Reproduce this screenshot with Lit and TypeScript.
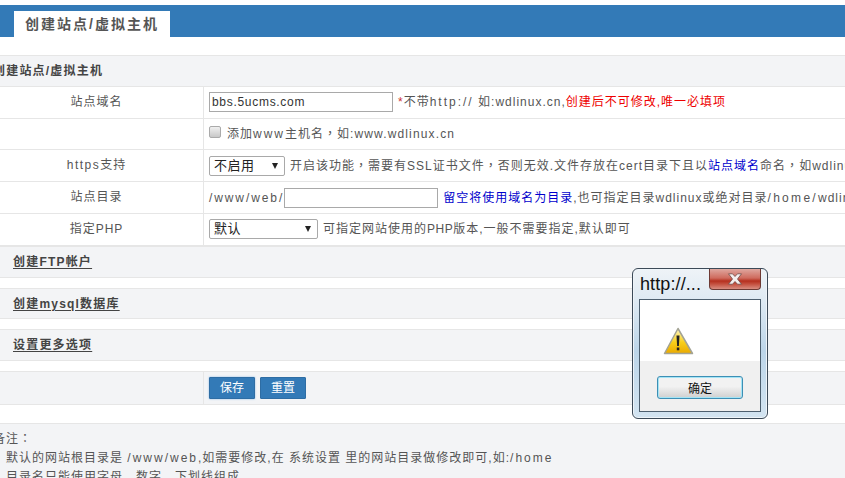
import { LitElement, html, css } from "lit";
import { customElement } from "lit/decorators.js";

@customElement("app-root")
export class AppRoot extends LitElement {
  static styles = css`
    :host {
      display: block;
      position: relative;
      width: 845px;
      height: 478px;
      overflow: hidden;
      background: #fff;
      color: #555;
      font: 12px/16px "Liberation Sans", "Noto Sans CJK SC", sans-serif;
      letter-spacing: 1px;
    }
    * { box-sizing: border-box; }
    .page { padding-top: 5px; white-space: nowrap; }
    .bar {
      height: 32px;
      background: #337ab7;
      padding: 6px 0 0 14px;
      margin-bottom: 18px;
    }
    .tab {
      display: inline-block;
      width: 156px;
      height: 26px;
      background: #fff;
      color: #555;
      font-size: 14px;
      font-weight: 700;
      line-height: 27px;
      text-align: center;
      letter-spacing: 2px;
    }
    .head {
      height: 31.800px;
      background: #f3f4f6;
      border-top: 1px solid #e6e6e6;
      border-bottom: 1px solid #e6e6e6;
      font-weight: 700;
      line-height: 30px;
      padding-left: 13px;
      color: #444;
      letter-spacing: 1.200px;
    }
    .head.first { padding-left: 0; text-indent: -7px; overflow: hidden; }
    .head u { text-underline-offset: 2px; }
    .gap { height: 10px; }
    .row {
      display: flex;
      height: 31.800px;
      border-bottom: 1px solid #e6e6e6;
    }
    .row .lab {
      flex: 0 0 204px;
      border-right: 1px solid #e6e6e6;
      text-align: center;
      line-height: 31px;
      padding-right: 10px;
    }
    .row .val {
      flex: 1;
      min-width: 0;
      overflow: hidden;
      padding-left: 5px;
      display: flex;
      align-items: center;
    }
    .row.tall { height: 33.400px; background: #f3f4f6; border-top: 1px solid #e6e6e6; }
    .inp {
      height: 20px;
      border: 1px solid #a9a9a9;
      background: #fff;
      font: inherit;
      letter-spacing: 0.700px;
      padding: 0 2px;
      color: #333;
      outline: none;
    }
    .site { width: 184px; }
    .dir { width: 154px; margin-right: 5px; flex: none; }
    .sel {
      position: relative;
      display: inline-block;
      height: 20px;
      border: 1px solid #a9a9a9;
      border-radius: 2px;
      background: #fff;
      color: #222;
      font-size: 13px;
      line-height: 18px;
      padding-left: 4px;
      margin-right: 5px;
      flex: none;
      letter-spacing: 0.500px;
    }
    .sel::after {
      content: "";
      position: absolute;
      top: 6px;
      right: 6px;
      border-left: 3px solid transparent;
      border-right: 3px solid transparent;
      border-top: 6px solid #222;
    }
    .sel.s1 { width: 76px; }
    .sel.s2 { width: 109px; }
    .cb {
      flex: none;
      width: 12px;
      height: 12px;
      margin: 0 6px 4px 0;
      border: 1px solid #aaa;
      border-radius: 2px;
      background: linear-gradient(#f0f0f0, #c8c8c8);
    }
    .hint { margin-left: 5px; }
    .red { color: #e00; }
    .star { color: #c33; }
    .blue { color: #00c; }
    .w { letter-spacing: 2px; }
    .w2 { letter-spacing: 1.900px; }
    .w3 { letter-spacing: 2.300px; }
    .ws { letter-spacing: 1.150px; }
    .ht { letter-spacing: 1.500px; }
    .ph { letter-spacing: 0.500px; }
    .p { font-family: "Noto Sans CJK TC", sans-serif; }
    .btn {
      display: inline-block;
      width: 46px;
      height: 22px;
      background: #337ab7;
      color: #fff;
      border: 1px solid #2e6da4;
      font-size: 12px;
      line-height: 21px;
      text-align: center;
      border-radius: 1px;
      margin-right: 5px;
      letter-spacing: 0;
    }
    .btn.focus { box-shadow: 0 0 2px 0 #7fb2e6; }
    .notes {
      margin-top: 18px;
      height: 60px;
      background: #f3f4f6;
      border-top: 1px solid #e6e6e6;
      padding-top: 4px;
      line-height: 19px;
    }
    .notes .t { margin-left: -7px; }
    .notes .l { padding-left: 6px; }
    .dlg {
      position: absolute;
      left: 632px;
      top: 268px;
      width: 136px;
      height: 151px;
      border: 1px solid #3c4a58;
      border-radius: 6px;
      background: linear-gradient(#eef3f7, #dfeaf3 20%, #bcd5e9 55%, #d3e4f1);
      padding: 0 6px 6px;
      display: flex;
      flex-direction: column;
      letter-spacing: 0;
      box-shadow: inset 0 0 0 1px #eef4f9;
    }
    .dlg-title {
      height: 30px;
      flex: none;
      color: #111;
      font: 18px/31px "Liberation Sans", sans-serif;
      padding-left: 1px;
      letter-spacing: 0.100px;
    }
    .close {
      position: absolute;
      top: 0;
      right: 6px;
      width: 52px;
      height: 21px;
      border: 1px solid #6d3a34;
      border-top: none;
      border-radius: 0 0 4px 4px;
      background: linear-gradient(#dfa79f, #cf6b5e 45%, #b5301f 60%, #c4503f 75%, #d88d80);
      display: flex;
      align-items: center;
      justify-content: center;
    }
    .dlg-body {
      flex: 1;
      border: 1px solid #4d5f6f;
      background: #f0f0f0;
      display: flex;
      flex-direction: column;
    }
    .dlg-top { height: 61px; background: #fff; padding: 27px 0 0 23px; }
    .dlg-top svg { display: block; }
    .dlg-foot { flex: 1; padding-top: 15px; display: flex; justify-content: center; }
    .ok {
      width: 86px;
      height: 23px;
      border: 1px solid #3d8fb5;
      border-radius: 3px;
      box-shadow: inset 0 0 0 1px #a4e4f5;
      background: linear-gradient(#f2f2f2 45%, #cfcfcf);
      color: #111;
      font: 12px/21px "Noto Sans CJK SC", sans-serif;
      text-align: center;
    }
  `;

  render() {
    return html`
      <div class="page">
        <div class="bar"><span class="tab">创建站点/虚拟主机</span></div>
        <div class="head first">创建站点/虚拟主机</div>
        <div class="row">
          <div class="lab">站点域名</div>
          <div class="val">
            <input class="inp site" .value=${"bbs.5ucms.com"} />
            <span class="hint"><span class="star">*</span>不带<span class="w">http://</span> 如:wdlinux.cn,<span class="red">创建后不可修改,唯一必填项</span></span>
          </div>
        </div>
        <div class="row">
          <div class="lab"></div>
          <div class="val"><span class="cb"></span><span>添加<span class="w">www</span>主机名<span class="p">，</span>如:<span class="ws">www.wdlinux.cn</span></span></div>
        </div>
        <div class="row">
          <div class="lab"><span class="ht">https</span>支持</div>
          <div class="val">
            <span class="sel s1">不启用</span>
            <span>开启该功能<span class="p">，</span>需要有SSL证书文件<span class="p">，</span>否则无效.文件存放在cert目录下且以<span class="blue">站点域名</span>命名<span class="p">，</span>如wdlinux.cn.crt</span>
          </div>
        </div>
        <div class="row">
          <div class="lab">站点目录</div>
          <div class="val">
            <span class="w2">/www/web/</span><input class="inp dir" />
            <span><span class="blue">留空将使用域名为目录</span>,也可指定目录wdlinux或绝对目录<span class="w3">/home/</span>wdlinux</span>
          </div>
        </div>
        <div class="row">
          <div class="lab">指定PHP</div>
          <div class="val">
            <span class="sel s2">默认</span>
            <span>可指定网站使用的<span class="ph">PHP</span>版本,一般不需要指定,默认即可</span>
          </div>
        </div>
        <div class="head"><u>创建FTP帐户</u></div>
        <div class="gap"></div>
        <div class="head"><u>创建mysql数据库</u></div>
        <div class="gap"></div>
        <div class="head"><u>设置更多选项</u></div>
        <div class="gap"></div>
        <div class="row tall">
          <div class="lab"></div>
          <div class="val"><span class="btn focus">保存</span><span class="btn">重置</span></div>
        </div>
        <div class="notes">
          <div class="t">备注<span class="p">：</span></div>
          <div class="l">默认的网站根目录是 <span class="w">/www/web</span>,如需要修改,在 系统设置 里的网站目录做修改即可,如:<span class="w">/home</span></div>
          <div class="l">目录名只能使用字母、数字、下划线组成</div>
        </div>
      </div>
      <div class="dlg">
        <div class="dlg-title">http://...</div>
        <div class="close">
          <svg width="16" height="12" viewBox="0 0 16 12">
            <path d="M1.500 .8h4l2.500 2.700 2.500-2.700h4L10.500 6l4 5.200h-4L8 8.500l-2.500 2.700h-4L5.500 6z" fill="#f4efee" stroke="#6e4a46" stroke-width=".8"/>
          </svg>
        </div>
        <div class="dlg-body">
          <div class="dlg-top">
            <svg width="31" height="28" viewBox="0 0 31 28">
              <defs>
                <linearGradient id="w" x1="0" y1="0" x2="0" y2="1">
                  <stop offset="0" stop-color="#fff8c8"/>
                  <stop offset=".55" stop-color="#f8cf1a"/>
                  <stop offset="1" stop-color="#eaa900"/>
                </linearGradient>
              </defs>
              <path d="M15 1.500 29.500 26.500H1.500z" fill="url(#w)" stroke="#a3a394" stroke-width="1.500" stroke-linejoin="round"/>
              <path d="M13.500 8.500h3l-.6 10.500h-1.800z" fill="#222"/>
              <rect x="13.800" y="20.500" width="2.500" height="2.800" fill="#222"/>
            </svg>
          </div>
          <div class="dlg-foot"><div class="ok">确定</div></div>
        </div>
      </div>
    `;
  }
}
